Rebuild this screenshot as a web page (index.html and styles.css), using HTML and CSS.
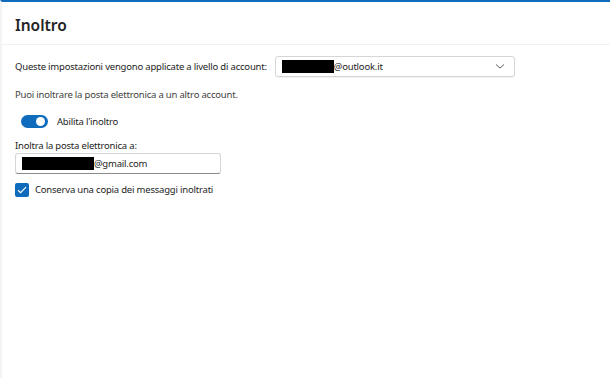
FILE: index.html
```html
<!DOCTYPE html>
<html lang="it">
<head>
<meta charset="utf-8">
<link rel="stylesheet" href="styles.css">
</head>
<body>
<div class="page">
  <header class="header">
    <h1 class="title">Inoltro</h1>
  </header>
  <main class="content">
    <div class="row account-row">
      <span class="label">Queste impostazioni vengono applicate a livello di account:</span>
      <div class="dropdown">
        <span class="redact redact-outlook"></span><span class="value">@outlook.it</span>
        <svg class="chevron" width="12" height="8" viewBox="0 0 12 8"><path d="M2 2.5 L6 6 L10 2.5" fill="none" stroke="#616161" stroke-width="1"/></svg>
      </div>
    </div>
    <p class="info">Puoi inoltrare la posta elettronica a un altro account.</p>
    <div class="row toggle-row">
      <span class="toggle"><span class="knob"></span></span>
      <span class="text">Abilita l'inoltro</span>
    </div>
    <div class="field">
      <label class="field-label">Inoltra la posta elettronica a:</label>
      <div class="input">
        <span class="redact redact-gmail"></span><span class="value">@gmail.com</span>
      </div>
    </div>
    <div class="row check-row">
      <span class="checkbox">
        <svg width="10" height="8" viewBox="0 0 10 8"><path d="M1 4.2 L3.6 6.6 L9 1.2" fill="none" stroke="#fff" stroke-width="1.2"/></svg>
      </span>
      <span class="text">Conserva una copia dei messaggi inoltrati</span>
    </div>
  </main>
</div>
</body>
</html>
```
FILE: styles.css
```css
html, body {
  margin: 0;
  padding: 0;
  background: #ffffff;
}
body {
  font-family: "Noto Sans", "Open Sans", sans-serif;
  font-size: 9.5px;
  letter-spacing: -0.2px;
  color: #242424;
}
.page {
  width: 610px;
  height: 378px;
  box-sizing: border-box;
  border-top: 2px solid #0f6cbd;
  border-left: 2px solid #f3f3f3;
  display: flex;
  flex-direction: column;
}
.header {
  height: 43px;
  border-bottom: 1px solid #f0f0f0;
  display: flex;
  align-items: center;
  padding: 3px 0 0 13px;
  box-sizing: border-box;
}
.title {
  margin: 0;
  font-size: 15.5px;
  font-weight: 600;
  letter-spacing: 0;
  color: #242424;
}
.content {
  padding: 10px 0 0 13px;
  display: flex;
  flex-direction: column;
}
.row {
  display: flex;
  align-items: center;
}
.account-row {
  height: 22px;
}
.label {
  margin-right: 8px;
}
.dropdown {
  width: 240px;
  height: 21px;
  box-sizing: border-box;
  border: 1px solid #d6d6d6;
  border-radius: 3px;
  box-shadow: 0 1px 1px rgba(0, 0, 0, 0.06);
  display: flex;
  align-items: center;
  padding-left: 6px;
}
.redact {
  display: inline-block;
  background: #000;
  height: 13px;
}
.redact-outlook {
  width: 52px;
}
.redact-gmail {
  width: 72px;
}
.value {
  color: #242424;
}
.chevron {
  margin-left: auto;
  margin-right: 8px;
}
.info {
  margin: 11px 0 0 0;
  color: #424242;
  line-height: 14px;
}
.toggle-row {
  margin-top: 11px;
  padding-left: 6px;
  height: 16px;
}
.toggle {
  width: 27px;
  height: 13px;
  border-radius: 7px;
  background: #0f6cbd;
  position: relative;
  margin-right: 9px;
}
.knob {
  position: absolute;
  right: 3px;
  top: 2px;
  width: 9px;
  height: 9px;
  border-radius: 50%;
  background: #fff;
}
.field {
  display: flex;
  flex-direction: column;
  margin-top: 10px;
}
.field-label {
  line-height: 14px;
}
.input {
  margin-top: 0;
  width: 206px;
  height: 21px;
  box-sizing: border-box;
  border: 1px solid #d6d6d6;
  border-bottom-color: #8a8a8a;
  border-radius: 3px;
  display: flex;
  align-items: center;
  padding-left: 6px;
}
.check-row {
  margin-top: 8px;
  height: 15px;
}
.checkbox {
  width: 14px;
  height: 14px;
  border-radius: 2px;
  background: #0f6cbd;
  display: flex;
  align-items: center;
  justify-content: center;
  margin-right: 6px;
}
```
